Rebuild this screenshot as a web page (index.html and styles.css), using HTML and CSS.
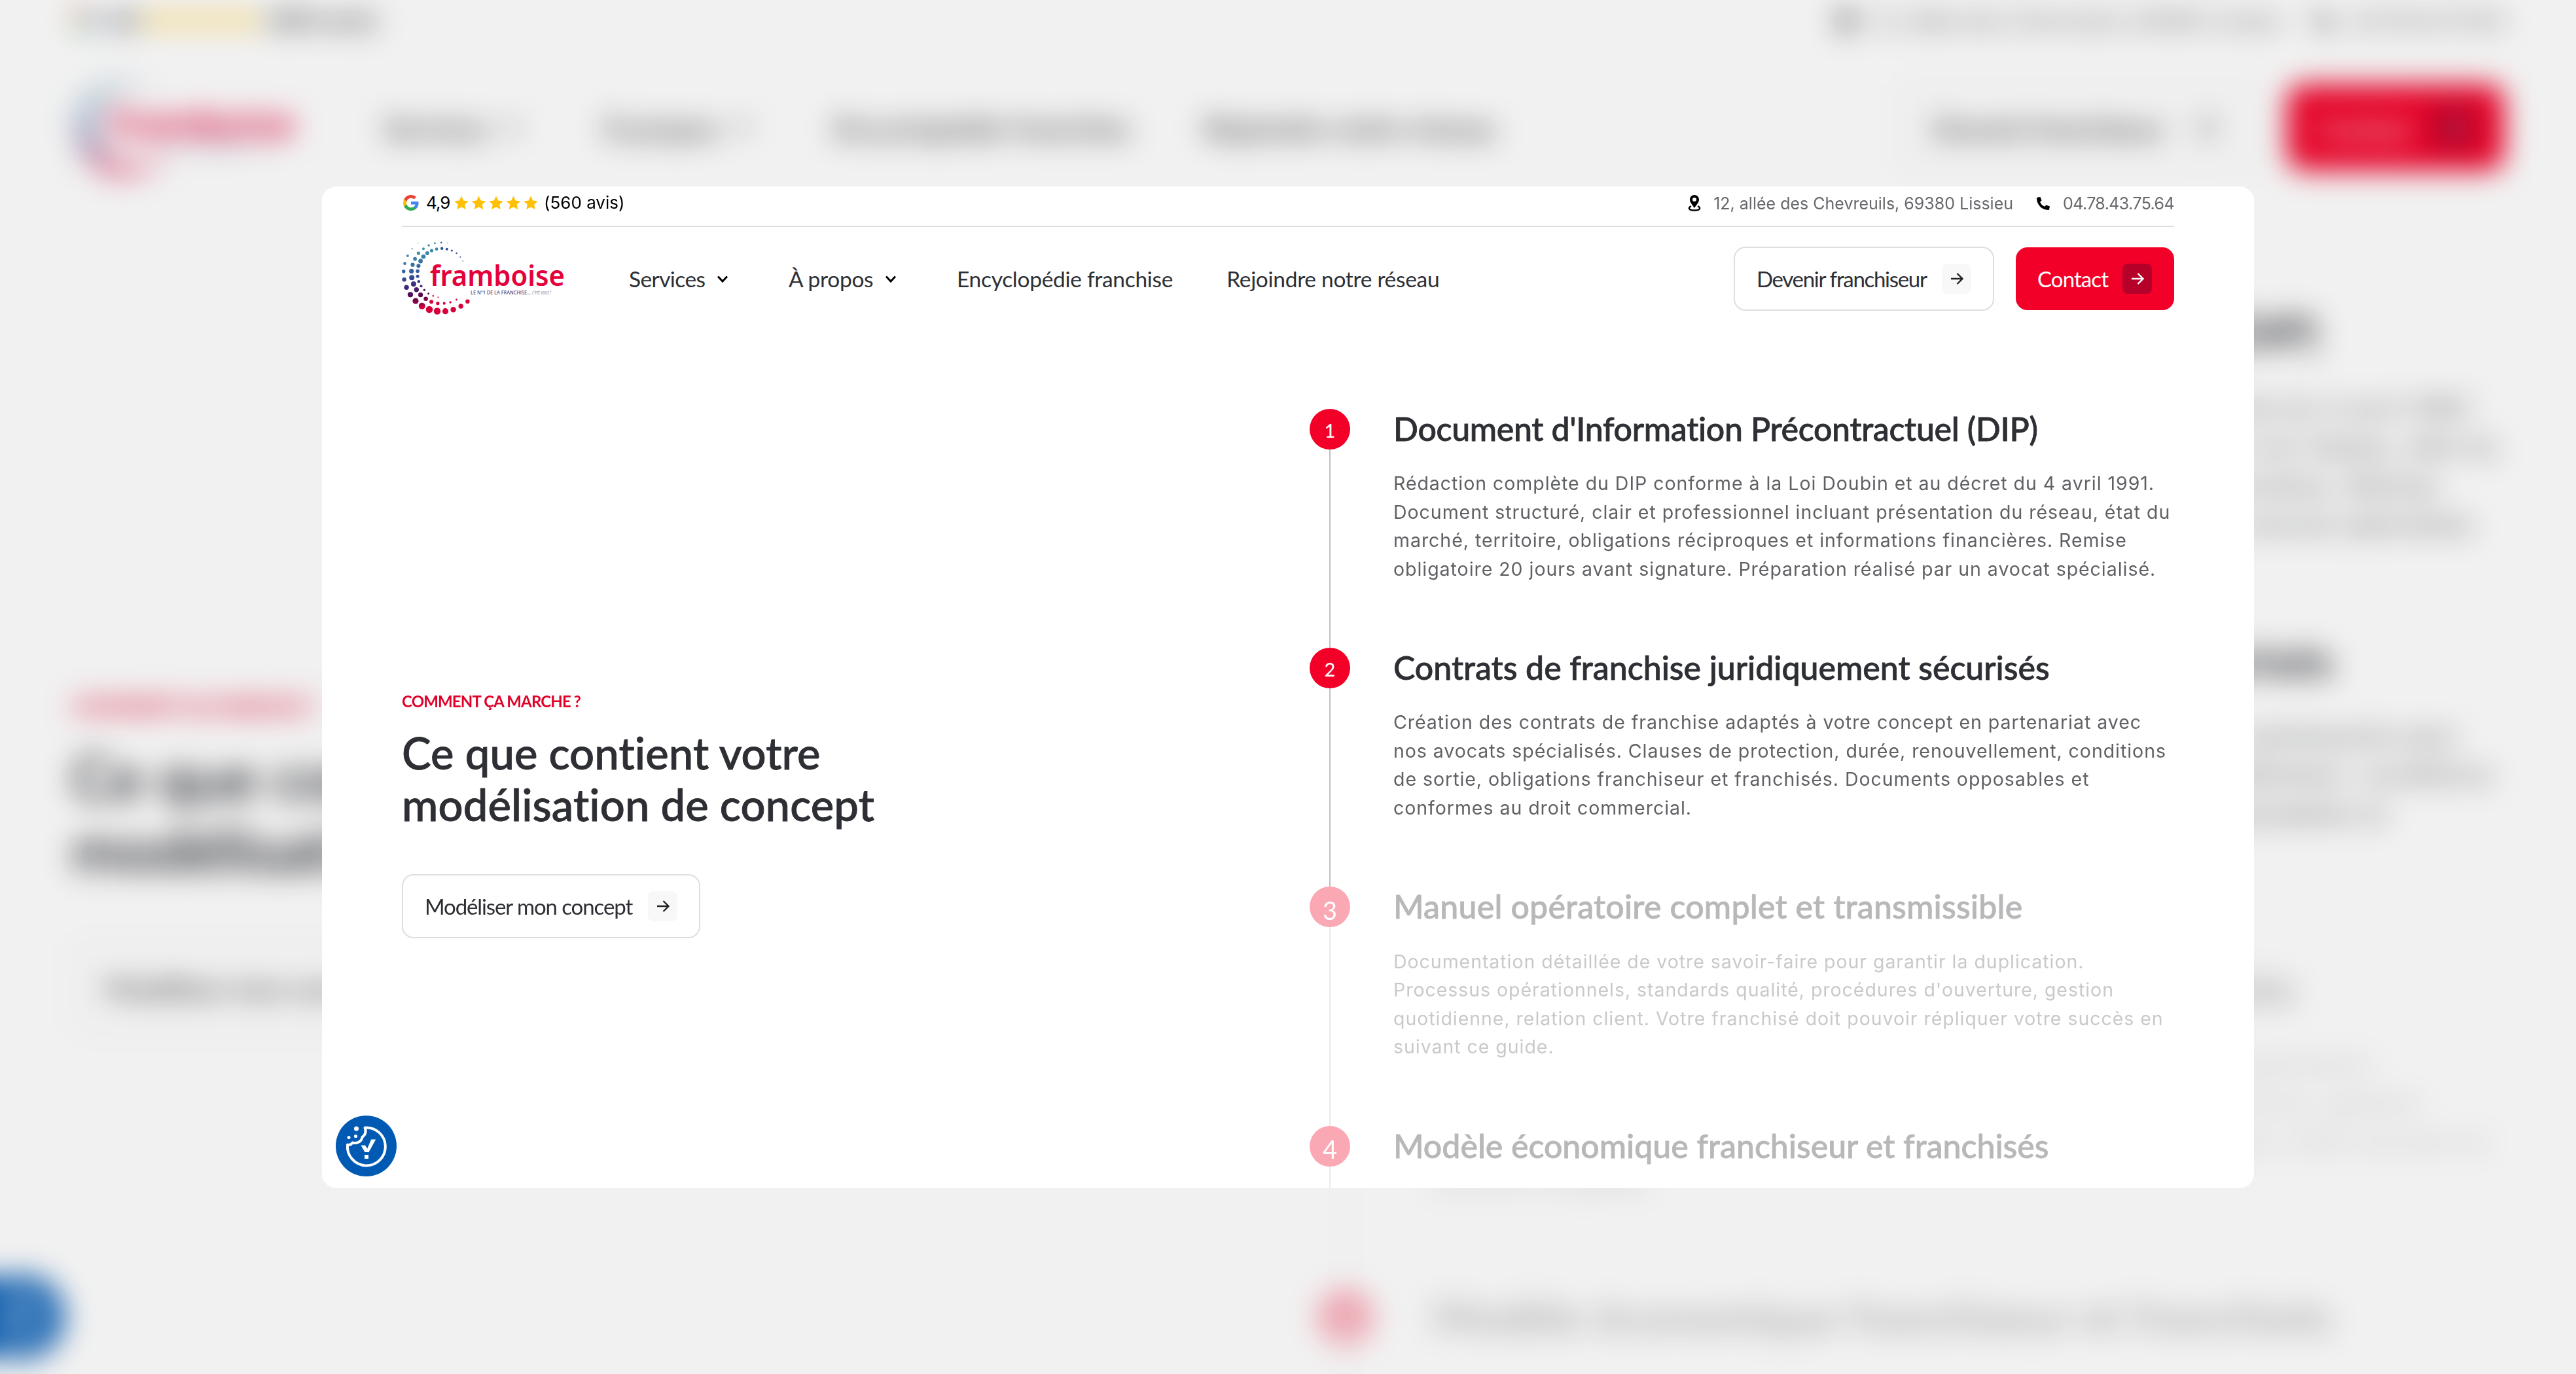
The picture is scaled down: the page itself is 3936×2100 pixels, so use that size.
FILE: index.html
```html
<!DOCTYPE html>
<html lang="fr">
<head>
  <meta charset="UTF-8">
  <meta name="viewport" content="width=device-width, initial-scale=1.0">
  <title>Framboise - Modélisation de concept</title>
  <link rel="stylesheet" href="styles.css">
</head>
<body>
  <div class="backdrop" id="backdrop" aria-hidden="true"></div>

  <div class="panel" id="panel">
    <div class="topbar">
      <div class="reviews">
        <svg class="google" viewBox="0 0 24 24">
          <path fill="#4285f4" d="M23.5 12.3c0-.9-.1-1.6-.2-2.3H12v4.5h6.5c-.3 1.5-1.1 2.8-2.4 3.6v3h3.9c2.200-2.100 3.500-5.100 3.500-8.800z"/>
          <path fill="#34a853" d="M12 24c3.200 0 6-1.100 8-2.900l-3.900-3c-1.100.7-2.500 1.200-4.100 1.200-3.100 0-5.800-2.100-6.700-5H1.300v3.100C3.300 21.300 7.300 24 12 24z"/>
          <path fill="#fbbc04" d="M5.300 14.300c-.5-1.500-.5-3.100 0-4.600V6.600h-4c-1.700 3.400-1.700 7.400 0 10.800z"/>
          <path fill="#ea4335" d="M12 4.700c1.800 0 3.300.6 4.600 1.800L20 3.100C17.900 1.200 15.200 0 12 0 7.300 0 3.300 2.700 1.300 6.600l4 3.100c.9-2.900 3.600-5 6.700-5z"/>
        </svg>
        <span class="score">4,9</span>
        <svg class="stars" viewBox="0 0 128 22">
          <defs><path id="star" d="M11 .5l3.300 6.900 7.500 1-5.500 5.200 1.400 7.400L11 17.500 4.300 21l1.400-7.400L.2 8.400l7.500-1z"/></defs>
          <g fill="#ffc107">
            <use href="#star"/><use href="#star" x="26.500"/><use href="#star" x="53"/><use href="#star" x="79.500"/><use href="#star" x="106"/>
          </g>
        </svg>
        <span>(560 avis)</span>
      </div>
      <div class="infos">
        <svg class="pin" viewBox="0 0 20 25">
          <path fill="#000" fill-rule="evenodd" d="M10 0c4 0 7 3 7 7 0 4.500-4 8-7 13-3-5-7-8.500-7-13 0-4 3-7 7-7zm0 4a3 3 0 100 6 3 3 0 000-6z"/>
          <path fill="none" stroke="#000" stroke-width="2.400" stroke-linecap="round" d="M4 17.500c-4 2.500-2.500 6 6 6s10-3.500 6-6"/>
        </svg>
        <span class="address">12, allée des Chevreuils, 69380 Lissieu</span>
        <svg class="phone" viewBox="0 0 20 20">
          <path fill="#000" d="M1 .8L5.500 0l2 5.500-2.400 2.200c1.300 3.200 3.800 5.700 7 7.100l2.300-2.500 5.600 2.200-.9 4.300c-.2.800-.8 1.200-1.600 1.200C8 20 0 12 0 2.300 0 1.500.3 1 1 .8z"/>
        </svg>
        <span class="tel">04.78.43.75.64</span>
      </div>
    </div>

    <header class="header">
      <svg class="logo" viewBox="0 0 250 116">
        <defs>
          <linearGradient id="ring" gradientUnits="userSpaceOnUse" x1="0" y1="0" x2="18" y2="106">
            <stop offset="0" stop-color="#45a39c"/>
            <stop offset=".25" stop-color="#3a83a8"/>
            <stop offset=".48" stop-color="#345a9c"/>
            <stop offset=".66" stop-color="#3c2a7c"/>
            <stop offset=".8" stop-color="#57084f"/>
            <stop offset=".93" stop-color="#9c0042"/>
            <stop offset="1" stop-color="#e4003a"/>
          </linearGradient>
        </defs>
        <g id="dots"></g>
        <text class="logo-name" x="43" y="69" textLength="206" lengthAdjust="spacingAndGlyphs">framboise</text>
        <text class="logo-tag" x="105" y="81.500" textLength="92" lengthAdjust="spacingAndGlyphs">LE N°1 DE LA FRANCHISE...</text>
        <text class="logo-tag light" x="199" y="81.500" textLength="29" lengthAdjust="spacingAndGlyphs">c'est vous !</text>
      </svg>
      <nav class="nav">
        <a class="has-menu services">Services <svg class="chevron" viewBox="0 0 18 13"><path d="M2 2.500l7 7.500 7-7.500"/></svg></a>
        <a class="has-menu about">À propos <svg class="chevron" viewBox="0 0 18 13"><path d="M2 2.500l7 7.500 7-7.500"/></svg></a>
        <a class="guide">Encyclopédie franchise</a>
        <a>Rejoindre notre réseau</a>
      </nav>
      <div class="actions">
        <a class="btn">Devenir franchiseur <span class="arrow"><svg viewBox="0 0 20 20"><path d="M1 10h17M10.500 2l8 8-8 8"/></svg></span></a>
        <a class="btn primary">Contact <span class="arrow"><svg viewBox="0 0 20 20"><path d="M1 10h17M10.500 2l8 8-8 8"/></svg></span></a>
      </div>
    </header>

    <main class="content">
      <section class="intro">
        <p class="eyebrow">COMMENT ÇA MARCHE ?</p>
        <h2>Ce que contient votre<br>modélisation de concept</h2>
        <a class="btn wide">Modéliser mon concept <span class="arrow"><svg viewBox="0 0 20 20"><path d="M1 10h17M10.500 2l8 8-8 8"/></svg></span></a>
      </section>

      <ol class="steps">
        <li class="step">
          <div class="marker"><span class="num">1</span><i class="line"></i></div>
          <div class="text">
            <h3 class="tight">Document d'Information Précontractuel (DIP)</h3>
            <p>Rédaction complète du DIP conforme à la Loi Doubin et au décret du 4 avril 1991.<br>Document structuré, clair et professionnel incluant présentation du réseau, état du<br>marché, territoire, obligations réciproques et informations financières. Remise<br>obligatoire 20 jours avant signature. Préparation réalisé par un avocat spécialisé.</p>
          </div>
        </li>
        <li class="step">
          <div class="marker"><span class="num">2</span><i class="line"></i></div>
          <div class="text">
            <h3>Contrats de franchise juridiquement sécurisés</h3>
            <p>Création des contrats de franchise adaptés à votre concept en partenariat avec<br>nos avocats spécialisés. Clauses de protection, durée, renouvellement, conditions<br>de sortie, obligations franchiseur et franchisés. Documents opposables et<br>conformes au droit commercial.</p>
          </div>
        </li>
        <li class="step faded">
          <div class="marker"><span class="num">3</span><i class="line"></i></div>
          <div class="text">
            <h3 class="loose">Manuel opératoire complet et transmissible</h3>
            <p>Documentation détaillée de votre savoir-faire pour garantir la duplication.<br>Processus opérationnels, standards qualité, procédures d'ouverture, gestion<br>quotidienne, relation client. Votre franchisé doit pouvoir répliquer votre succès en<br>suivant ce guide.</p>
          </div>
        </li>
        <li class="step faded">
          <div class="marker"><span class="num">4</span><i class="line"></i></div>
          <div class="text">
            <h3>Modèle économique franchiseur et franchisés</h3>
          </div>
        </li>
      </ol>
    </main>

    <div class="cookie">
      <svg viewBox="0 0 93 93">
        <circle cx="46.500" cy="46.500" r="46.500" fill="#0059b3"/>
        <path fill="none" stroke="#fff" stroke-width="4" stroke-linejoin="round" d="M44.500 18.500A29 29 0 1 1 18 44.500c3.500.8 6-.5 7.500-3 7 1.500 14-1.500 15-8.500 5-3.500 6.500-8 4-14.500z"/>
        <g fill="#fff">
          <circle cx="31.500" cy="20" r="3.600"/><circle cx="20" cy="33.500" r="2.500"/><circle cx="30.500" cy="31.500" r="2.600"/>
          <path d="M38.500 45.500h6.500l3.200 5 6-14h7L50.500 56h-6zM44 60h6v6h-6z"/>
        </g>
      </svg>
    </div>
  </div>

  <script>
    // logo ring: x, y, radius
    const dots = [
      [24.6, 3.3, .8], [15.6, 12.3, 1.1], [8.9, 23, 1.9], [4.5, 34.7, 2.3], [2.7, 46.7, 2.7], [3.6, 59.3, 3.2], [7.1, 71.3, 3.7], [13, 82.3, 4.1],
      [21, 92, 4.6], [30.8, 99.7, 5], [42, 105, 5.3], [54, 107.5, 5.2], [66.5, 107.7, 4.6], [78.6, 105.3, 4.2], [90.2, 100, 3.7], [100.4, 92.7, 3.2],
      [70.1, 3.3, .7], [60.3, 2.7, 1.3], [50.4, 3.7, 1.5], [41.1, 7, 1.8], [33, 12.3, 2], [25.4, 19, 2.6], [20.1, 27.7, 2.9], [16.5, 36.7, 3.1],
      [14.7, 46.3, 3.6], [15.2, 56.3, 4], [17.9, 66, 4], [22.3, 74.7, 3.7], [28.6, 82.7, 3.6], [36.6, 88.7, 3.3], [45.1, 93.3, 3], [54.9, 95.7, 2.6],
      [64.7, 95.7, 2.1], [74.1, 94, 1.7], [83.5, 90, 1.4],
      [93.3, 31, .8], [89.3, 24.7, 1], [83.5, 19, 1.2], [76.3, 15, 1.6], [68.8, 12.7, 2], [61.2, 11.7, 2.2], [53.1, 12.7, 2.4], [45.5, 15, 2.6],
      [38.8, 19, 3], [33, 24.3, 3.3], [28.6, 31, 3.4], [25.4, 38.3, 3.1], [24.1, 46.3, 2.8], [24.1, 54.3, 2.5], [25.9, 62.3, 2.2], [29.5, 69.3, 2],
      [34.4, 75.3, 1.7], [40.6, 80.7, 1.5], [47.8, 84.3, 1.3], [55.4, 86.3, 1]
    ];
    document.getElementById("dots").innerHTML = dots.map(([x, y, r]) => {
      let color = "url(#ring)";
      if (x > 40 && y > 84) color = "#d8003a";
      if (x > 60 && y < 32) color = "#33508f";
      return `<circle cx="${x}" cy="${y}" r="${r}" fill="${color}"/>`;
    }).join("");

    // enlarged blurred copy of the page behind the panel
    const copy = document.getElementById("panel").cloneNode(true);
    copy.removeAttribute("id");
    document.getElementById("backdrop").appendChild(copy);
  </script>
</body>
</html>
```
FILE: styles.css
```css
* { box-sizing: border-box; margin: 0; padding: 0; }
body { width: 3936px; height: 2100px; overflow: hidden; background: #f1f1f1; font-family: Lato, sans-serif; color: #2d2f34; font-variant-ligatures: none; display: grid; place-items: center; }
svg { display: block; flex: none; }

.backdrop, body > .panel { grid-area: 1 / 1; }
.backdrop { width: 3936px; height: 2100px; box-sizing: content-box; margin: -60px; padding: 60px; overflow: hidden; display: grid; place-items: center; background: #fff; filter: blur(22px) brightness(.945); }
.backdrop .panel { transform: scale(1.3725); overflow: visible; border-radius: 0; }
.backdrop .topbar { border-color: #fff; }
.backdrop .reviews, .backdrop .infos { transform: translateY(-3px); }
.backdrop .cookie { border-radius: 50%; box-shadow: -45px 0 #0059b3; }

.panel { position: relative; width: 2952px; height: 1531px; padding: 0 122px; background: #fff; border-radius: 22px; overflow: hidden; }

.topbar { display: flex; justify-content: space-between; height: 62px; padding-bottom: 10px; border-bottom: 2px solid #ddd; font-family: Inter, sans-serif; }
.reviews, .infos { display: flex; align-items: center; height: 50px; white-space: nowrap; }
.reviews { font-size: 26px; color: #000; padding-left: 2px; }
.google { width: 24px; height: 24px; }
.score { width: 43px; margin-left: 11px; letter-spacing: -1px; }
.stars { width: 128px; height: 22px; margin-right: 9px; }
.infos { font-size: 25px; color: #66686b; padding-top: 2px; }
.pin { width: 20px; height: 25px; margin-right: 19px; }
.address { margin-right: 36px; }
.phone { width: 20px; height: 20px; margin-right: 20px; }
.tel { letter-spacing: -.6px; }

.header { display: flex; align-items: center; padding-top: 31px; height: 128px; }
.logo { width: 250px; height: 116px; margin-right: 97px; }
.logo-name { font: 600 44px "Noto Sans", sans-serif; fill: #e4003a; }
.logo-tag { font: 600 8.500px "Open Sans", sans-serif; fill: #5b5687; }
.logo-tag.light { font-style: italic; font-weight: 400; fill: #8c8aa0; }
.nav { display: flex; align-items: center; font-size: 33.500px; letter-spacing: -.3px; white-space: nowrap; }
.has-menu { display: flex; align-items: center; justify-content: space-between; }
.services { width: 152px; margin-right: 92px; letter-spacing: -.6px; }
.about { width: 165px; margin-right: 92px; }
.guide { margin-right: 82px; }
.chevron { width: 18px; height: 13px; }
.chevron path { fill: none; stroke: #000; stroke-width: 3; }
.actions { display: flex; gap: 33px; margin-left: auto; }

.btn { display: flex; align-items: center; justify-content: space-between; width: 398px; height: 98px; padding: 0 33px 0 33px; border: 2px solid #dedede; border-radius: 18px; background: #fff; font-size: 33px; letter-spacing: -1.300px; white-space: nowrap; }
.btn.primary { width: 242px; height: 96px; padding: 0 32px 0 31px; background: #f20028; border-color: #f20028; color: #fff; letter-spacing: -.9px; align-self: center; }
.btn.wide { width: 456px; letter-spacing: -1.100px; }
.arrow { display: grid; place-items: center; width: 45px; height: 46px; border-radius: 8px; background: #f8f8f8; }
.arrow svg { width: 20px; height: 20px; }
.arrow path { fill: none; stroke: #222; stroke-width: 2.400; }
.primary .arrow { background: #b5002a; }
.primary .arrow path { stroke: #fff; }

.content { display: flex; justify-content: space-between; }
.intro { padding-top: 582px; }
.eyebrow { font-size: 24px; font-weight: 700; line-height: 30px; letter-spacing: -.85px; color: #e00029; margin-bottom: 24px; }
h2 { font-size: 67px; font-weight: 500; line-height: 79.500px; letter-spacing: .1px; margin-bottom: 66px; -webkit-text-stroke: .9px; }

.steps { width: 1321px; padding-top: 150px; list-style: none; }
.step { display: flex; gap: 66px; height: 365.400px; white-space: nowrap; }
.marker { display: flex; flex-direction: column; align-items: center; width: 62px; }
.num { display: grid; place-items: center; width: 62px; height: 62px; border-radius: 50%; background: #f20028; color: #fff; font-size: 29px; font-weight: 500; padding-top: 3px; }
.line { flex: 1; width: 2px; background: #c0c0c0; }
.text { padding-top: 2px; }
h3 { font-size: 50px; font-weight: 500; line-height: 57px; margin-bottom: 33.600px; -webkit-text-stroke: .8px; }
h3.tight { letter-spacing: -.3px; }
h3.loose { letter-spacing: .22px; }
.text p { font: 400 28.500px/43.500px Inter, sans-serif; letter-spacing: .96px; color: #5f6164; }
.faded { opacity: .34; }
.faded .num { font-size: 38px; font-weight: 400; padding-top: 9px; }

.cookie { position: absolute; left: 21px; bottom: 18px; width: 93px; height: 93px; }
```
